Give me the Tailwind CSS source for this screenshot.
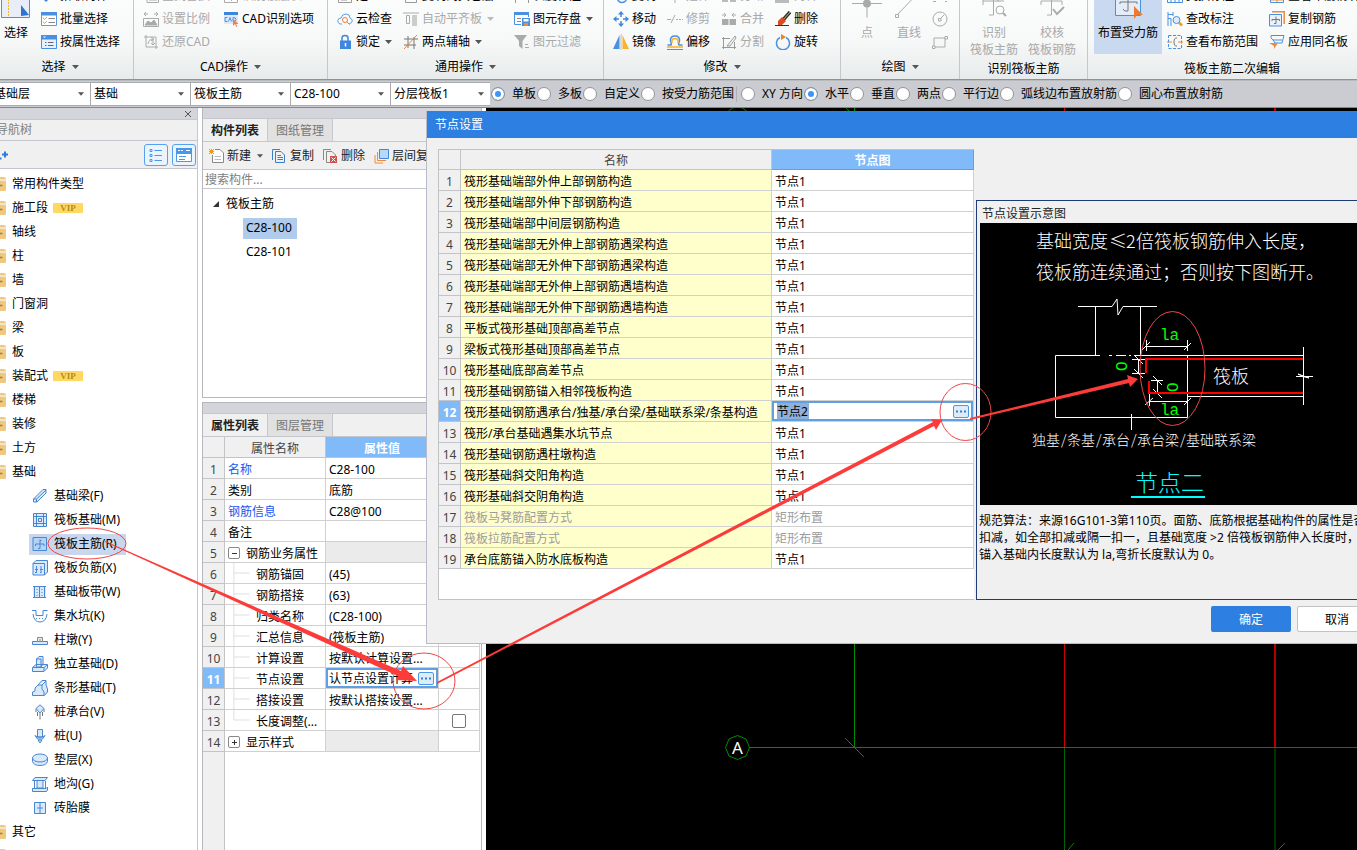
<!DOCTYPE html>
<html lang="zh-CN">
<head>
<meta charset="utf-8">
<title>节点设置</title>
<script src="https://cdn.jsdelivr.net/npm/@tailwindcss/browser@4"></script>
</head>
<body class="bg-white text-black text-[12px] leading-4 font-['Noto_Sans','Noto_Sans_CJK_SC',sans-serif]">
<svg class="hidden">
  <symbol id="ar" viewBox="0 0 7 4"><path d="M0 0H7L3.500 4Z" fill="#555"/></symbol>
  <symbol id="arg" viewBox="0 0 7 4"><path d="M0 0H7L3.500 4Z" fill="#bbb"/></symbol>
  <symbol id="fold" viewBox="0 0 16 14"><path d="M0 2Q0 0 2 0H14L16 1V2.500H0ZM0 3.500H16V12.500Q16 14 14.500 14H0Z" fill="#efc982"/><path d="M8 8.500H12.500" stroke="#a87b2a" stroke-width="1.500"/></symbol>
  <symbol id="ln" viewBox="0 0 17 21"><path d="M.5 0V21M.5 10.500H17" stroke="#ddd" fill="none"/></symbol>
  <symbol id="lne" viewBox="0 0 17 21"><path d="M.5 0V10.500H17" stroke="#ddd" fill="none"/></symbol>
</svg>
<div class="relative flex h-screen flex-col overflow-hidden whitespace-nowrap">

<!-- Ribbon -->
<header class="flex h-20 shrink-0 overflow-hidden border-b border-[#8d9294] bg-linear-to-b from-[#fbfcfc] via-[#f7f9f9] to-[#e8ebeb] [&_h2]:pt-[2px]">
  <section class="-ml-[13px] flex w-[147px] shrink-0 flex-col border-r border-[#c4c8cb]">
    <div class="-mt-4 flex h-[69px] pl-[13px]">
      <button class="flex w-[32px] flex-col items-center">
        <svg class="h-10 w-8 shrink-0" viewBox="0 0 32 40" fill="none"><path d="M1.500 0V33.500H29.500V0" fill="#e9edf8" stroke="#4a93e2"/><path d="M8.500 0V33" stroke="#eeb53c" stroke-dasharray="2 1"/><path d="M21 21V32L29 31Z" fill="#2c74d0"/></svg>
        <span class="leading-[17px]">选择</span>
      </button>
      <div class="ml-[9px] *:flex *:h-[23px] *:items-center *:gap-[3px] [&_svg]:size-4">
        <button><svg viewBox="0 0 16 16"><path d="M4 13L9 8" stroke="#3f88dd" stroke-width="3"/></svg>拾取构件</button>
        <button><svg viewBox="0 0 16 16" fill="none"><path d="M.5 1.500H15.500V14.500H.5Z" fill="#fff" stroke="#5a9be4"/><path d="M0 1H16V4.500H0Z" fill="#4a90e0"/><path d="M2 6.500L3.500 8.500L6 6M2 10.500L3.500 12.500L6 10" stroke="#e8a33d"/><path d="M7.500 7.500H14M7.500 11.500H14" stroke="#888"/></svg>批量选择</button>
        <button><svg viewBox="0 0 16 16" fill="none"><path d="M.5 1.500H15.500V14.500H.5Z" fill="#e7f1fd" stroke="#4a90e0"/><path d="M0 1H16V5.500H0Z" fill="#4a90e0"/><path d="M2 2.500H5L3.500 4Z" fill="#fff"/><path d="M4 8.500H5.500M7 8.500H12.500M4 11.500H5.500M7 11.500H12.500" stroke="#667"/></svg>按属性选择</button>
      </div>
    </div>
    <h2 class="flex h-[26px] items-center justify-center gap-[6px]">选择<svg class="h-1 w-[7px]"><use href="#ar"/></svg></h2>
  </section>

  <section class="flex w-[194px] shrink-0 flex-col border-r border-[#c4c8cb]">
    <div class="-mt-4 flex pl-[9px] *:h-[69px] [&_button]:flex [&_button]:h-[23px] [&_button]:items-center [&_button]:gap-[3px] [&_svg]:size-4">
      <div class="w-[80px] text-[#a9a9a9]">
        <button><svg viewBox="0 0 16 16" fill="none" stroke="#aaa"><path d="M4 3.500H15.500V14.500H4ZM6 9H14M6 12H14"/></svg>查找替换</button>
        <button><svg viewBox="0 0 16 16" fill="none" stroke="#aaa"><path d="M1 3H5M11 3H15M3 1L1 3L3 5M13 1L15 3L13 5M.5 7.500H15.500V15.500H.5Z"/><path d="M2 14L5 10L8 12L11 9L14 14Z" fill="#aaa"/></svg>设置比例</button>
        <button><svg viewBox="0 0 16 16" fill="none" stroke="#aaa"><path d="M1 3H13V15M3 1V13H15M5 10Q6 5 10 5M8 3L11 5L8 7M10 6V11M8 9L10 11L12 9"/></svg>还原CAD</button>
      </div>
      <div>
        <button class="text-[#a9a9a9]"><svg viewBox="0 0 16 16" fill="none" stroke="#aaa"><path d="M1.500 3.500H14.500V14.500H1.500ZM5 9L9 13"/></svg>识别楼层表</button>
        <button><svg viewBox="0 0 16 16"><path d="M1 1H15V13H1Z" fill="#dceafb"/><path d="M1 1H15V4H1Z" fill="#3d86dc"/><path d="M4.500 6.500H2V10.500H4.500M5.500 10.500L7 6.500L8.500 10.500M10 6.500V10.500Q13 10.500 13 8.500T10 6.500" fill="none" stroke="#4a90e0"/><path d="M10 8V15L12 13L13.500 16L14.500 15.500L13 13H15.500Z" fill="#ee7f55"/></svg>CAD识别选项</button>
      </div>
    </div>
    <h2 class="flex h-[26px] items-center justify-center gap-[6px]">CAD操作<svg class="h-1 w-[7px]"><use href="#ar"/></svg></h2>
  </section>

  <section class="flex w-[276px] shrink-0 flex-col border-r border-[#c4c8cb]">
    <div class="-mt-4 flex pl-[9px] *:h-[69px] [&_button]:flex [&_button]:h-[23px] [&_button]:items-center [&_button]:gap-[3px]">
      <div class="w-[66px]">
        <button><svg class="size-4" viewBox="0 0 16 16" fill="none" stroke="#999"><path d="M1.500 3.500H14.500V14.500H1.500ZM4 12H10"/></svg>定义</button>
        <button><svg class="size-4" viewBox="0 0 16 16" fill="none"><path d="M5 13H3Q.5 12 .8 9.500T4 7Q5 3 9 3T13 7Q15.500 8 15.300 10T12 13" stroke="#5aa0ea"/><circle cx="8" cy="9" r="2.500" stroke="#ee7d3c"/><path d="M10 11L12.500 13.500" stroke="#ee7d3c"/></svg>云检查</button>
        <button><svg class="size-4" viewBox="0 0 16 16" fill="none"><path d="M5 7V4Q5 1.500 8 1.500T11 4V7" stroke="#4286dc" stroke-width="1.500"/><path d="M3 6.500H14V15H3Z" fill="#3f86de"/><path d="M8.500 9V12.500" stroke="#fff" stroke-width="1.500"/></svg>锁定<svg class="ml-[2px] h-1 w-[7px]"><use href="#ar"/></svg></button>
      </div>
      <div class="w-[111px]">
        <button><svg class="size-4" viewBox="0 0 16 16" fill="none" stroke="#999"><path d="M2.500 3.500H13.500V14.500H2.500Z"/></svg>复制到其它层</button>
        <button class="text-[#a9a9a9]"><svg class="size-4" viewBox="0 0 16 16" fill="none"><path d="M0 2H16M3.500 4.500H6.500V12.500H3.500Z" stroke="#aaa"/><path d="M9 4H14V15H9Z" fill="#ccc"/></svg>自动平齐板<svg class="ml-[2px] h-1 w-[7px]"><use href="#arg"/></svg></button>
        <button><svg class="size-4" viewBox="0 0 16 16" fill="none"><path d="M5 2V14M11 3V15M1 5H15M1 11H13" stroke="#777"/><path d="M1 15L14 1" stroke="#e98546"/></svg>两点辅轴<svg class="ml-[2px] h-1 w-[7px]"><use href="#ar"/></svg></button>
      </div>
      <div>
        <button><svg class="size-4" viewBox="0 0 16 16" fill="none" stroke="#999"><path d="M1.500 9V15M14.500 9V15M2 11H14"/></svg>长度标注</button>
        <button><svg class="size-4" viewBox="0 0 16 16" fill="none"><path d="M.5 2H14.500V6M.5 2V13.500H7" stroke="#4a90e0"/><path d="M0 1H15V4H0Z" fill="#4a90e0"/><path d="M3 7.500H7M3 10.500H7" stroke="#888"/><path d="M8 7H16V15H8Z" fill="#4a90e0"/><path d="M9.500 8H14.500V10.500H9.500Z" fill="#fff"/><path d="M10 12H14V15H10Z" fill="#ee8a3c"/></svg>图元存盘<svg class="ml-[2px] h-1 w-[7px]"><use href="#ar"/></svg></button>
        <button class="text-[#a9a9a9]"><svg class="size-4" viewBox="0 0 16 16"><path d="M0 1H13L8.500 7V15L5 12V7Z" fill="#aaa"/><path d="M11 10.500H14M11 13.500H15" stroke="#aaa"/></svg>图元过滤</button>
      </div>
    </div>
    <h2 class="flex h-[26px] items-center justify-center gap-[6px]">通用操作<svg class="h-1 w-[7px]"><use href="#ar"/></svg></h2>
  </section>

  <section class="flex w-[237px] shrink-0 flex-col border-r border-[#c4c8cb]">
    <div class="-mt-4 flex pl-[9px] *:h-[69px] *:w-[54px] [&_button]:flex [&_button]:h-[23px] [&_button]:items-center [&_button]:gap-[3px] [&_svg]:size-4">
      <div>
        <button><svg viewBox="0 0 16 16" fill="none" stroke="#4a90e0" stroke-width="1.500"><circle cx="9" cy="10" r="4.500"/></svg>复制</button>
        <button><svg viewBox="0 0 16 16" fill="#3f86de"><path d="M8 0L11 3.500H5ZM8 16L5 12.500H11ZM0 8L3.500 5V11ZM16 8L12.500 11V5Z"/><path d="M8 3V6M8 10V13M3 8H6M10 8H13" stroke="#3f86de" stroke-width="1.500"/></svg>移动</button>
        <button><svg viewBox="0 0 16 16"><path d="M6.500 1V15H0Z" fill="#4a90e0"/><path d="M9.500 1V15H16Z" fill="#f9b233"/><path d="M8 0V16" stroke="#bbb"/></svg>镜像</button>
      </div>
      <div>
        <button class="text-[#a9a9a9]"><svg viewBox="0 0 16 16" stroke="#aaa"><path d="M8 7V15"/></svg>延伸</button>
        <button class="text-[#a9a9a9]"><svg viewBox="0 0 16 16" fill="none" stroke="#aaa"><path d="M0 8.500H4M4 12L8 4M9 8.500H11M12 8.500H14M15 8.500H16"/></svg>修剪</button>
        <button><svg viewBox="0 0 16 16" fill="none"><path d="M.5 11H4Q5 10 3.500 7Q3 2 8 2T12.500 7Q11 10 12 11H15.500" stroke="#4a90e0" stroke-width="1.500"/><path d="M5 9V7Q5 4.500 8 4.500T11 7V9M0 13H16" stroke="#f5b335" stroke-width="1.500"/><path d="M0 15.500H16" stroke="#4a90e0"/></svg>偏移</button>
      </div>
      <div class="text-[#a9a9a9]">
        <button><svg viewBox="0 0 16 16" fill="#bbb"><path d="M1 10H7V14H1ZM9 10H15V14H9Z"/></svg>打断</button>
        <button><svg viewBox="0 0 16 16" fill="#aaa"><path d="M1 8H7.500V14H1ZM8.500 8H15V14H8.500Z"/><path d="M1 4H5M3 2L5 4L3 6M15 4H11M13 2L11 4L13 6" fill="none" stroke="#aaa"/></svg>合并</button>
        <button><svg viewBox="0 0 16 16" fill="none" stroke="#999"><path d="M1 4.500H9M15 13.500H1M2.500 3V15M13.500 8V15M6 12L14 2L15 4L9 12Z"/></svg>分割</button>
      </div>
      <div>
        <button class="text-[#a9a9a9]"><svg viewBox="0 0 16 16"><path d="M0 8H14V15H0Z" fill="#bbb"/></svg>对齐</button>
        <button><svg viewBox="0 0 16 16"><path d="M15 1L8 9" stroke="#333" stroke-width="3.500"/><path d="M15 1L8 9" stroke="#d8a35b" stroke-width="1"/><path d="M7 6L11 10L7 14H3L3 10Z" fill="#db4c22"/><path d="M0 14.500H14" stroke="#333"/></svg>删除</button>
        <button><svg viewBox="0 0 16 16" fill="none"><path d="M5 3.500A6.500 6.500 0 1 0 11 3.500" stroke="#4a90e0" stroke-width="1.500"/><path d="M6 0L11 3L6 6Z" fill="#ee8322"/></svg>旋转</button>
      </div>
    </div>
    <h2 class="flex h-[26px] items-center justify-center gap-[6px]">修改<svg class="h-1 w-[7px]"><use href="#ar"/></svg></h2>
  </section>

  <section class="flex w-[119px] shrink-0 flex-col border-r border-[#c4c8cb]">
    <div class="-mt-4 flex h-[69px] pl-[11px] text-[#a9a9a9]">
      <button class="flex w-[30px] flex-col items-center"><svg class="h-10 w-8 shrink-0" viewBox="0 0 32 40"><path d="M1 19.500H31M16 4V33.500" stroke="#aaa"/><circle cx="16" cy="19.500" r="4" fill="#aaa"/></svg><span class="leading-[17px]">点</span></button>
      <button class="ml-[12px] flex w-[30px] flex-col items-center"><svg class="h-10 w-8 shrink-0" viewBox="0 0 32 40" fill="none" stroke="#aaa"><path d="M5 30L26 8M2.500 30.500H5.500V33.500H2.500Z"/></svg><span class="leading-[17px]">直线</span></button>
      <div class="ml-[8px] *:flex *:h-[23px] *:items-center [&_svg]:size-4">
        <button aria-label="弧"><svg viewBox="0 0 16 16" fill="none" stroke="#aaa"><path d="M1 13.500H4M13 13.500H15"/></svg></button>
        <button aria-label="圆"><svg viewBox="0 0 16 16" fill="none" stroke="#aaa"><circle cx="8" cy="8" r="7"/><path d="M6.500 7.500H9V10H6.500ZM9 7L12 4"/></svg></button>
        <button aria-label="矩形"><svg viewBox="0 0 16 16" fill="none" stroke="#aaa"><path d="M2 4H13V13H2Z"/><path d="M.5 12H3V14.500H.5ZM13 2.500H15.500V5H13Z" fill="#fff"/></svg></button>
      </div>
    </div>
    <h2 class="flex h-[26px] items-center justify-center gap-[6px]">绘图<svg class="h-1 w-[7px]"><use href="#ar"/></svg></h2>
  </section>

  <section class="flex w-[128px] shrink-0 flex-col border-r border-[#c4c8cb]">
    <div class="-mt-4 flex h-[73px] gap-[10px] pl-[10px] text-[#a9a9a9]">
      <button class="flex flex-col items-center"><svg class="h-10 w-8 shrink-0" viewBox="0 0 32 40" fill="none" stroke="#aaa"><path d="M5 21V17H26M15.500 10V31H11M5 17V15M20 18V15"/><circle cx="22" cy="26" r="4"/><path d="M25 29L28 32" stroke-width="2"/></svg><span class="leading-[17px]">识别<br>筏板主筋</span></button>
      <button class="flex flex-col items-center"><svg class="h-10 w-8 shrink-0" viewBox="0 0 32 40" fill="none" stroke="#aaa"><path d="M5 21V17H26V21M15.500 10V31H11"/><path d="M17 25L21 30L28 23" stroke-width="2"/></svg><span class="leading-[17px]">校核<br>筏板钢筋</span></button>
    </div>
    <h2 class="flex h-[22px] items-center justify-center">识别筏板主筋</h2>
  </section>

  <section class="flex w-[288px] shrink-0 flex-col">
    <div class="-mt-4 flex h-[73px] pl-[6px] [&_div_button]:flex [&_div_button]:h-[23px] [&_div_button]:items-center [&_div_button]:gap-[3px] [&_div_svg]:size-4">
      <button class="flex h-[70px] w-[68px] flex-col items-center bg-[#c9d9f0]"><svg class="h-10 w-8 shrink-0" viewBox="0 0 32 40" fill="none"><path d="M3.500 0V31.500H28.500V0" fill="#e3edfa" stroke="#4a90e0"/><path d="M8 20V18H25V20M16 8V27Q12 28 11 25" stroke="#777"/><path d="M22 22V35L25 31H31Z" fill="#ee7a2b"/></svg><span class="leading-[17px]">布置受力筋</span></button>
      <div class="ml-[5px] w-[102px]">
        <button><svg viewBox="0 0 16 16" fill="none" stroke="#4a90e0"><path d="M.5 8V14.500H15.500V8M4 10V14M8 10V14M12 10V14"/></svg>交换标注</button>
        <button><svg viewBox="0 0 16 16" fill="none"><path d="M1 1V15M1 3.500H6M1 7.500H4V15M6 1V5" stroke="#4a90e0"/><circle cx="9.500" cy="9" r="3.500" fill="#dcecfb" stroke="#4a90e0"/><path d="M12 11.500L15 14.500" stroke="#f09a2a" stroke-width="2.500"/></svg>查改标注</button>
        <button><svg viewBox="0 0 16 16" fill="none"><path d="M1.500 1.500H14.500V14.500H1.500Z" stroke="#4a90e0" stroke-dasharray="3 1.500"/><path d="M0 8H5M11 8H16" stroke="#ee8a3c"/><path d="M10 4Q7 3.500 7 8T10 12" stroke="#777"/></svg>查看布筋范围</button>
      </div>
      <div>
        <button><svg viewBox="0 0 16 16" fill="none" stroke="#ee8a3c"><path d="M1 12H15M8 8V15"/><path d="M1.500 8V14.500H14.500V8" stroke="#4a90e0"/></svg>查看布筋情况</button>
        <button><svg viewBox="0 0 16 16" fill="none"><path d="M3 .8H15.200V13" stroke="#ee8a3c" stroke-width="1.500"/><path d="M.5 3.500H12.500V15H.5Z" fill="#e8f1fc" stroke="#4a90e0"/><path d="M3 10V8.500H10.500V10M7 5.500V12.500H5" stroke="#777"/></svg>复制钢筋</button>
        <button><svg viewBox="0 0 16 16" fill="none"><path d="M2 1.500H15L13 9H6L4 6H13M2 1.500V4L4 6" stroke="#4a90e0"/><path d="M0 9H9L5 15V12Z" fill="#ee8a3c"/></svg>应用同名板</button>
      </div>
    </div>
    <h2 class="flex h-[22px] items-center justify-center">筏板主筋二次编辑</h2>
  </section>
</header>

<!-- Option bar -->
<form class="flex h-[28px] shrink-0 items-center border-t border-b border-t-[#b8bbbe] border-b-[#85898c] bg-[#caccd1]">
  <div class="-ml-[10px] flex [&_select]:h-[22px] [&_select]:w-full [&_select]:appearance-none [&_select]:bg-white [&_select]:pl-[3px] [&_select]:leading-[22px] [&>span]:relative [&>span]:w-[100px] [&>span]:border [&>span]:border-r-0 [&>span]:border-[#a9abb0] [&_svg]:absolute [&_svg]:right-[6px] [&_svg]:top-[9px] [&_svg]:h-1 [&_svg]:w-[6px] [&_svg]:pointer-events-none">
    <span><select aria-label="楼层"><option>基础层</option></select><svg><use href="#ar"/></svg></span>
    <span><select aria-label="分类"><option>基础</option></select><svg><use href="#ar"/></svg></span>
    <span><select aria-label="构件类型"><option>筏板主筋</option></select><svg><use href="#ar"/></svg></span>
    <span><select aria-label="构件"><option>C28-100</option></select><svg><use href="#ar"/></svg></span>
    <span><select aria-label="分层"><option>分层筏板1</option></select><svg><use href="#ar"/></svg></span>
  </div>
  <div class="ml-px flex gap-px [&_label]:flex [&_label]:items-center [&_label]:gap-[7px] [&_input]:size-[14px] [&_input]:appearance-none [&_input]:rounded-full [&_input]:border [&_input]:border-[#929498] [&_input]:bg-white [&_input:checked]:bg-[#3d96f5] [&_input:checked]:shadow-[inset_0_0_0_3px_white]">
    <label><input type="radio" name="scope" checked>单板</label>
    <label><input type="radio" name="scope">多板</label>
    <label><input type="radio" name="scope">自定义</label>
    <label><input type="radio" name="scope">按受力筋范围</label>
    <span class="ml-px mr-[3px] w-px bg-[#aeb0b5]"></span>
    <label><input type="radio" name="dir">XY 方向</label>
    <label><input type="radio" name="dir" checked>水平</label>
    <label><input type="radio" name="dir">垂直</label>
    <label><input type="radio" name="dir">两点</label>
    <label><input type="radio" name="dir">平行边</label>
    <label><input type="radio" name="dir">弧线边布置放射筋</label>
    <label><input type="radio" name="dir">圆心布置放射筋</label>
  </div>
</form>

<main class="flex min-h-0 flex-1">
  <!-- Navigation tree -->
  <nav class="mr-1 flex w-[198px] shrink-0 flex-col overflow-hidden border-r border-[#c5c7ce]">
    <div class="flex h-[11px] shrink-0 items-center justify-end bg-[#d3d5da] pr-[6px]"><button aria-label="关闭"><svg class="size-[6px]" viewBox="0 0 6 6" stroke="#555"><path d="M0 0L6 6M6 0L0 6"/></svg></button></div>
    <h2 class="flex h-[22px] shrink-0 items-center border-y border-[#c5c7ce] bg-[#f0f0f0] text-[#808080]"><span class="-ml-1">导航树</span></h2>
    <div class="flex h-[28px] shrink-0 items-center border-b border-[#c5c7ce] bg-[#f0f0f0] pr-px">
      <button aria-label="展开"><svg class="h-3 w-2" viewBox="0 0 8 12"><path d="M0 9.500H1.500M2 5.500H8M5 2.500V8.500" stroke="#2f7bd6" stroke-width="2"/></svg></button>
      <button aria-label="列表" class="ml-auto flex h-[22px] w-6 items-center justify-center rounded-[3px] border border-[#55a0f0] bg-[#eaf3fe]"><svg class="size-[14px]" viewBox="0 0 14 14" fill="none" stroke="#4a97ea"><path d="M1 1.500H3V3.500H1ZM1 6.500H3V8.500H1ZM1 11.500H3V13.500H1ZM5.500 2.500H13M5.500 7.500H13M5.500 12.500H13"/></svg></button>
      <button aria-label="窗口" class="ml-1 flex h-[22px] w-6 items-center justify-center rounded-[3px] border border-[#55a0f0] bg-[#eaf3fe]"><svg class="h-[14px] w-4" viewBox="0 0 16 14" fill="none"><path d="M.5 1H15.500V13.500H.5Z" fill="#fff" stroke="#4a97ea"/><path d="M0 0H16V6H0Z" fill="#4a97ea"/><path d="M2 2.500H4M5 2.500H7M10 2.500H14" stroke="#fff"/><path d="M3 8.500H10M3 11.500H9" stroke="#4a97ea"/></svg></button>
    </div>
    <div class="min-h-0 flex-1 overflow-hidden bg-white pt-[3px]">
      <ul class="-ml-[10px] [&>li]:flex [&>li]:h-6 [&>li]:items-center [&>li]:gap-[6px] [&>li>svg]:h-[14px] [&>li>svg]:w-4 [&_b]:ml-[-1px] [&_b]:h-[10px] [&_b]:w-[30px] [&_b]:bg-[#ffd863] [&_b]:text-center [&_b]:font-['Liberation_Serif',serif] [&_b]:text-[9px] [&_b]:leading-[11px] [&_b]:text-[#b08c1c]">
        <li><svg><use href="#fold"/></svg>常用构件类型</li>
        <li><svg><use href="#fold"/></svg>施工段<b>VIP</b></li>
        <li><svg><use href="#fold"/></svg>轴线</li>
        <li><svg><use href="#fold"/></svg>柱</li>
        <li><svg><use href="#fold"/></svg>墙</li>
        <li><svg><use href="#fold"/></svg>门窗洞</li>
        <li><svg><use href="#fold"/></svg>梁</li>
        <li><svg><use href="#fold"/></svg>板</li>
        <li><svg><use href="#fold"/></svg>装配式<b>VIP</b></li>
        <li><svg><use href="#fold"/></svg>楼梯</li>
        <li><svg><use href="#fold"/></svg>装修</li>
        <li><svg><use href="#fold"/></svg>土方</li>
        <li><svg><use href="#fold"/></svg>基础</li>
      </ul>
      <ul class="pl-[29px] [&>li]:flex [&>li]:h-6 [&>li]:items-center [&_a]:flex [&_a]:h-[21px] [&_a]:items-center [&_a]:gap-[6px] [&_a]:pl-[3px] [&_a]:pr-[9px] [&_svg]:size-4 [&_svg]:fill-[#d9e8fa] [&_svg]:stroke-[#4687d0]">
        <li><a href="#"><svg viewBox="0 0 16 16"><path d="M1.500 11L11 1.500H14V5L5 14H1.500ZM1.500 11H4.500V14M4.500 11L14 2"/></svg>基础梁(F)</a></li>
        <li><a href="#"><svg viewBox="0 0 16 16"><path d="M1.500 1.500H14.500V14.500H1.500ZM4.500 1V15M11.500 1V15M1 4.500H15M1 11.500H15M6.500 6.500H9.500V9.500H6.500Z"/></svg>筏板基础(M)</a></li>
        <li><a href="#" class="bg-[#c8d7ee]"><svg viewBox="0 0 16 16"><path d="M1 1.500H14.500V14.500H1Z" fill="#b4d3f4"/><path d="M3.500 10V8H12V10M8 3.500V12.500H6M8 4.500H9.500" fill="none"/></svg>筏板主筋(R)</a></li>
        <li><a href="#"><svg viewBox="0 0 16 16"><path d="M1 3.500H12.500V15H1ZM1 3.500L4 .5H15.500V12L12.500 15"/><path d="M4.500 6V13M9 6V13M3 9.500H6M8 9.500H11M3 12.500H4.500M8 12.500H9" fill="none"/></svg>筏板负筋(X)</a></li>
        <li><a href="#"><svg viewBox="0 0 16 16"><path d="M1 2.500H14V13.500H1Z" stroke="none"/><path d="M1 2.500H14M1 13.500H14M2.500 3V13M7.500 2V14M12.500 3V13" /><path d="M5 5V12M10 5V12" stroke-dasharray="1 2"/></svg>基础板带(W)</a></li>
        <li><a href="#"><svg viewBox="0 0 16 16"><path d="M0 2.500H4V7.500H11V2.500H15.500M1 6Q2 14 8 14T15 6" fill="none"/><path d="M4 10.500H12" stroke-dasharray="1 2"/></svg>集水坑(K)</a></li>
        <li><a href="#"><svg viewBox="0 0 16 16"><path d="M.5 9.500H15.500V12.500H.5Z"/><path d="M5.500 5.500H10.500V9.500H5.500ZM8 7V9" stroke="#888" fill="#eee"/></svg>柱墩(Y)</a></li>
        <li><a href="#"><svg viewBox="0 0 16 16"><path d="M.5 11.500L4 8.500H15.500V12L12 15.500H.5ZM4.500 11V3L7 .5H11V8L9 11ZM4.500 3H9V11M12 11.500V15M1 11.500H12L15 9"/></svg>独立基础(D)</a></li>
        <li><a href="#"><svg viewBox="0 0 16 16"><path d="M.5 15.500V12L3 11V8L6 5L10 .5H14V5L15.500 9V12L12.500 15.500ZM6 5H10L14 1M10 5V9L12 12V15"/></svg>条形基础(T)</a></li>
        <li><a href="#"><svg viewBox="0 0 16 16"><path d="M8 .8L12 4.500L8 9L4 4.500Z"/><path d="M4 5V8M12 5V8M8 9V15.500M5.500 8V12M10.500 8V12" stroke="#777"/></svg>桩承台(V)</a></li>
        <li><a href="#"><svg viewBox="0 0 16 16"><path d="M5.500 1.500H10.500V9H5.500ZM3 7.500L5.500 9H10.500L13 7.500L10.500 11H5.500ZM6 12H10L8 15Z"/></svg>桩(U)</a></li>
        <li><a href="#"><svg viewBox="0 0 16 16"><path d="M.5 6V9.500Q2 13.500 8 13.500T15.500 9.500V6"/><ellipse cx="8" cy="6" rx="7.500" ry="4"/></svg>垫层(X)</a></li>
        <li><a href="#"><svg viewBox="0 0 16 16"><path d="M.5 4.500L3 1.500H15.500L13 4.500ZM2.500 5V12M5 5V12H11V5M13.500 5V12M.5 12.500H14L15.500 11V14L14.500 15.500H.5Z"/></svg>地沟(G)</a></li>
        <li><a href="#"><svg viewBox="0 0 16 16"><path d="M2.500 2.500H13.500V13.500H2.500ZM8 2.500V13.500M5 8H11" /></svg>砖胎膜</a></li>
      </ul>
      <ul class="-ml-[10px] [&>li]:flex [&>li]:h-6 [&>li]:items-center [&>li]:gap-[6px] [&_svg]:h-[14px] [&_svg]:w-4">
        <li><svg><use href="#fold"/></svg>其它</li>
        <li><svg><use href="#fold"/></svg></li>
      </ul>
    </div>
  </nav>

  <!-- Component list and properties -->
  <div class="mr-1 flex w-[280px] shrink-0 flex-col overflow-hidden">
    <section class="flex h-[290px] shrink-0 flex-col border border-t-0 border-[#b5b7bd]">
      <div class="h-[11px] shrink-0 border-b border-[#c5c7ce] bg-[#d3d5da]"></div>
      <div class="flex h-[23px] shrink-0 border-b border-[#c5c7ce] bg-[#f0f0f0] *:w-[65px] *:border-r *:border-[#c5c7ce] *:pt-[2px]" role="tablist">
        <button role="tab" class="font-bold text-[#222]">构件列表</button><button role="tab" class="bg-[#e1e1e1] text-[#777]">图纸管理</button>
      </div>
      <div class="flex h-7 shrink-0 items-center border-b border-[#c5c7ce] bg-[#f0f0f0] pl-[6px] text-[#222] [&_button]:flex [&_button]:items-center [&_button]:gap-[3px]">
        <button><svg class="h-4 w-[15px]" viewBox="0 0 15 16" fill="none"><path d="M6 1.500H11L14.500 5V14.500H3.500V7" fill="#fff" stroke="#888"/><path d="M5.500 8.500H12M5.500 11.500H12" stroke="#bbb"/><path d="M0 1L5 6M5 1L0 6M0 3.500H5M2.500 1V6" stroke="#f09a1a"/></svg>新建<svg class="ml-[3px] h-1 w-[6px]"><use href="#ar"/></svg></button>
        <button class="ml-[9px]"><svg class="h-4 w-[15px]" viewBox="0 0 15 16" fill="none"><path d="M.5 12V1.500H8M3.500 3.500H9L12.500 7V14.500H3.500Z" stroke="#3b7fcb"/><path d="M5.500 7.500H9M5.500 9.500H11M5.500 11.500H11" stroke="#3b7fcb"/></svg>复制</button>
        <button class="ml-[9px]"><svg class="h-4 w-[15px]" viewBox="0 0 15 16" fill="none"><path d="M.5 12V1.500H8M3.500 14.500V3.500H9L12.500 7V8M3.500 14.500H7" stroke="#888"/><path d="M7 8H14V15H7Z" fill="#d05050"/><path d="M8.500 9.500L12.500 13.500M12.500 9.500L8.500 13.500" stroke="#fff"/></svg>删除</button>
        <button class="ml-[9px]"><svg class="h-4 w-[15px]" viewBox="0 0 15 16" fill="none"><path d="M5.500 1.500H14.500V10.500H5.500Z" fill="#b8d8fb" stroke="#3f8ae0"/><path d="M3.500 4V12.500H12M1 7V15H9" stroke="#ee8a3c"/></svg>层间复制</button>
      </div>
      <input type="text" aria-label="搜索构件" placeholder="搜索构件..." class="h-[19px] shrink-0 border-b border-[#c5c7ce] bg-white pl-[2px] outline-none placeholder:text-[#808080]">
      <ul class="pt-[3px] *:flex *:h-6 *:items-center">
        <li class="gap-[7px] pl-[10px]"><svg class="size-[6px]" viewBox="0 0 6 6"><path d="M6 0V6H0Z" fill="#333"/></svg>筏板主筋</li>
        <li class="pl-10"><span class="bg-[#b1cbed] pt-px pr-[5px] pb-[3px] pl-[3px] leading-[17px]">C28-100</span></li>
        <li class="pl-[43px]">C28-101</li>
      </ul>
    </section>
    <section class="mt-1 flex min-h-0 flex-1 flex-col border-x border-t border-[#b5b7bd]">
      <div class="h-[11px] shrink-0 border-b border-[#c5c7ce] bg-[#d3d5da]"></div>
      <div class="flex h-[23px] shrink-0 border-b border-[#c5c7ce] bg-[#f0f0f0] *:w-[65px] *:border-r *:border-[#c5c7ce] *:pt-[2px]" role="tablist">
        <button role="tab" class="font-bold text-[#222]">属性列表</button><button role="tab" class="bg-[#e1e1e1] text-[#777]">图层管理</button>
      </div>
      <table class="w-[277px] shrink-0 table-fixed border-separate border-spacing-0 text-left [&_td]:h-[21px] [&_td]:overflow-hidden [&_td]:border-r [&_td]:border-b [&_td]:border-[#d0d0d0] [&_td]:p-0 [&_td]:pt-[2px] [&_td]:pl-[3px] [&_td]:leading-[17px] [&_th]:h-[21px] [&_th]:border-r [&_th]:border-b [&_th]:border-[#c2c4c8] [&_th]:p-0 [&_th]:pt-[2px] [&_th]:text-center [&_th]:font-normal [&_th]:leading-[17px] [&_th]:text-[#444] [&_td>div]:flex [&_td>div]:h-[18px] [&_td>div]:items-center">
        <colgroup><col class="w-[22px]"><col class="w-[101px]"><col class="w-[113px]"><col class="w-[41px]"></colgroup>
        <thead class="bg-[#f0f0f0]"><tr><th></th><th>属性名称</th><th class="bg-[#80baf9]"><span class="font-bold text-white">属性值</span></th><th></th></tr></thead>
        <tbody class="[&_th]:bg-[#f0f0f0]">
          <tr><th>1</th><td class="text-[#1a56f0]">名称</td><td>C28-100</td><td></td></tr>
          <tr><th>2</th><td>类别</td><td>底筋</td><td></td></tr>
          <tr><th>3</th><td class="text-[#1a56f0]">钢筋信息</td><td>C28@100</td><td></td></tr>
          <tr><th>4</th><td>备注</td><td></td><td></td></tr>
          <tr><th>5</th><td><div class="gap-[6px]"><button aria-label="折叠" class="size-3 rounded-[2px] border border-[#888] bg-white"><svg class="size-[10px]" viewBox="0 0 10 10"><path d="M3 5.500H8" stroke="#333"/></svg></button>钢筋业务属性</div></td><td class="bg-[#ebebeb]"></td><td></td></tr>
          <tr><th>6</th><td><div class="gap-[6px] pl-[5px]"><svg class="-mt-[2px] h-5 w-[17px]"><use href="#ln"/></svg>钢筋锚固</div></td><td>(45)</td><td></td></tr>
          <tr><th>7</th><td><div class="gap-[6px] pl-[5px]"><svg class="-mt-[2px] h-5 w-[17px]"><use href="#ln"/></svg>钢筋搭接</div></td><td>(63)</td><td></td></tr>
          <tr><th>8</th><td><div class="gap-[6px] pl-[5px]"><svg class="-mt-[2px] h-5 w-[17px]"><use href="#ln"/></svg>归类名称</div></td><td>(C28-100)</td><td></td></tr>
          <tr><th>9</th><td><div class="gap-[6px] pl-[5px]"><svg class="-mt-[2px] h-5 w-[17px]"><use href="#ln"/></svg>汇总信息</div></td><td>(筏板主筋)</td><td></td></tr>
          <tr><th>10</th><td><div class="gap-[6px] pl-[5px]"><svg class="-mt-[2px] h-5 w-[17px]"><use href="#ln"/></svg>计算设置</div></td><td>按默认计算设置...</td><td></td></tr>
          <tr><th class="bg-[#80baf9]!"><span class="font-bold text-white">11</span></th><td><div class="gap-[6px] pl-[5px]"><svg class="-mt-[2px] h-5 w-[17px]"><use href="#ln"/></svg>节点设置</div></td><td class="p-0!"><div class="h-5! border-2 border-[#5f9fe2] pl-px"><input type="text" aria-label="节点设置" value="认节点设置计算" class="h-4 w-[86px] pt-px outline-none"><button aria-label="编辑节点" class="ml-[3px] h-[13px] w-4 rounded-[2px] border border-[#4b98e6] bg-[#deecfa]"><svg class="h-[11px] w-[14px]" viewBox="0 0 14 11"><path d="M2 5.500H12" stroke="#2f7fd6" stroke-width="2" stroke-dasharray="2 2"/></svg></button></div></td><td></td></tr>
          <tr><th>12</th><td><div class="gap-[6px] pl-[5px]"><svg class="-mt-[2px] h-5 w-[17px]"><use href="#ln"/></svg>搭接设置</div></td><td>按默认搭接设置...</td><td></td></tr>
          <tr><th>13</th><td><div class="gap-[6px] pl-[5px]"><svg class="-mt-[2px] h-5 w-[17px] shrink-0"><use href="#lne"/></svg>长度调整(...</div></td><td></td><td><div class="justify-center pr-[3px]"><input type="checkbox" aria-label="长度调整附加" class="size-[14px] appearance-none rounded-[2px] border border-[#777] bg-white"></div></td></tr>
          <tr><th>14</th><td><div class="gap-[6px]"><button aria-label="展开" class="size-3 rounded-[2px] border border-[#888] bg-white"><svg class="size-[10px]" viewBox="0 0 10 10"><path d="M3 5.500H8M5.500 3V8" stroke="#333"/></svg></button>显示样式</div></td><td class="bg-[#ebebeb]"></td><td></td></tr>
        </tbody>
      </table>
      <div class="w-[22px] flex-1 border-r border-[#c2c4c8] bg-[#f0f0f0]"></div>
    </section>
  </div>

  <!-- Drawing canvas, in page coordinates shifted to the canvas origin -->
  <div class="min-w-0 flex-1 overflow-hidden bg-black">
    <svg class="h-full w-full" fill="none"><g transform="translate(-486 -108)">
      <circle cx="737.500" cy="119" r="12" stroke="#008000"/><path d="M845 107L849 111" stroke="#008000"/>
      <path d="M854.500 108V747M749 747.500H1065M845 738L864 757" stroke="#008c00"/>
      <path d="M1064.500 748V850M1275 748V850" stroke="#006400"/><path d="M1068 850L1074 843M1278 850L1285 843" stroke="#008c00"/>
      <path d="M1064.500 108V747" stroke="#c80000"/><path d="M1275 108V747" stroke="#b00000" stroke-width="2"/><path d="M1065 747.500H2400" stroke="#ff0000"/>
      <path d="M737.500 735.500L746 739L749.500 747.500L746 756L737.500 759.500L729 756L725.500 747.500L729 739Z" stroke="#008c00"/>
      <text x="737.500" y="754" text-anchor="middle" font-size="17" fill="#fff">A</text>
    </g></svg>
  </div>
</main>

<!-- Node settings window -->
<div role="dialog" aria-label="节点设置" class="absolute left-[426px] top-[111px] flex h-[533px] w-[962px] flex-col border border-t-0 border-[#b9bcc8] bg-[#f0f0f0]">
  <h1 class="flex h-[27px] shrink-0 items-center bg-[#2d80e2] pl-2 text-white">节点设置</h1>
  <div class="mt-[11px] flex h-[451px] pl-[11px]">
    <div class="w-[536px] border border-r-0 border-[#c0c2c6] bg-white">
      <table class="w-full table-fixed border-separate border-spacing-0 text-left [&_td]:h-[21px] [&_td]:border-r [&_td]:border-b [&_td]:border-[#d0d0d0] [&_td]:p-0 [&_td]:pt-[2px] [&_td]:pl-[3px] [&_td]:leading-[17px] [&_th]:h-[20px] [&_th]:border-r [&_th]:border-b [&_th]:border-[#c2c4c8] [&_th]:p-0 [&_th]:pt-[2px] [&_th]:text-center [&_th]:font-normal [&_th]:leading-[17px] [&_th]:text-[#444] [&_tbody_td:nth-child(2)]:bg-[#ffffcb]">
        <colgroup><col class="w-[22px]"><col class="w-[311px]"><col></colgroup>
        <thead class="bg-[#f0f0f0]"><tr><th></th><th>名称</th><th class="border-[#5f9fe2]! bg-[#80baf9]"><span class="font-bold text-white">节点图</span></th></tr></thead>
        <tbody class="[&_th]:bg-[#f0f0f0]">
          <tr><th>1</th><td>筏形基础端部外伸上部钢筋构造</td><td>节点1</td></tr>
          <tr><th>2</th><td>筏形基础端部外伸下部钢筋构造</td><td>节点1</td></tr>
          <tr><th>3</th><td>筏形基础端部中间层钢筋构造</td><td>节点1</td></tr>
          <tr><th>4</th><td>筏形基础端部无外伸上部钢筋遇梁构造</td><td>节点1</td></tr>
          <tr><th>5</th><td>筏形基础端部无外伸下部钢筋遇梁构造</td><td>节点1</td></tr>
          <tr><th>6</th><td>筏形基础端部无外伸上部钢筋遇墙构造</td><td>节点1</td></tr>
          <tr><th>7</th><td>筏形基础端部无外伸下部钢筋遇墙构造</td><td>节点1</td></tr>
          <tr><th>8</th><td>平板式筏形基础顶部高差节点</td><td>节点1</td></tr>
          <tr><th>9</th><td>梁板式筏形基础顶部高差节点</td><td>节点1</td></tr>
          <tr><th>10</th><td>筏形基础底部高差节点</td><td>节点1</td></tr>
          <tr><th>11</th><td>筏形基础钢筋锚入相邻筏板构造</td><td>节点1</td></tr>
          <tr><th class="bg-[#80baf9]!"><span class="font-bold text-white">12</span></th><td>筏形基础钢筋遇承台/独基/承台梁/基础联系梁/条基构造</td><td class="p-0!"><div class="flex h-5 items-center justify-between border-2 border-[#5f9fe2] pl-[3px] pr-[2px]"><input type="text" aria-label="节点图" value="节点2" class="h-4 w-8 bg-[#8fb0d8] pt-px outline-none"><button aria-label="选择节点图" class="h-[13px] w-4 rounded-[2px] border border-[#4b98e6] bg-[#deecfa]"><svg class="h-[11px] w-[14px]" viewBox="0 0 14 11"><path d="M2 5.500H12" stroke="#2f7fd6" stroke-width="2" stroke-dasharray="2 2"/></svg></button></div></td></tr>
          <tr><th>13</th><td>筏形/承台基础遇集水坑节点</td><td>节点1</td></tr>
          <tr><th>14</th><td>筏形基础钢筋遇柱墩构造</td><td>节点1</td></tr>
          <tr><th>15</th><td>筏形基础斜交阳角构造</td><td>节点1</td></tr>
          <tr><th>16</th><td>筏形基础斜交阴角构造</td><td>节点1</td></tr>
          <tr class="[&_td]:text-[#9c9c9c]"><th>17</th><td>筏板马凳筋配置方式</td><td>矩形布置</td></tr>
          <tr class="[&_td]:text-[#9c9c9c]"><th>18</th><td>筏板拉筋配置方式</td><td>矩形布置</td></tr>
          <tr><th>19</th><td>承台底筋锚入防水底板构造</td><td>节点1</td></tr>
        </tbody>
      </table>
    </div>
    <figure class="mt-[51px] ml-[2px] flex w-[402px] flex-col overflow-hidden border border-[#1f3c78]">
      <figcaption class="flex h-[22px] shrink-0 items-center pt-[4px] pl-[5px] text-[#222]">节点设置示意图</figcaption>
      <!-- Node diagram, drawn in page coordinates -->
      <svg class="ml-[3px] h-[282px] w-[394px] shrink-0 bg-black font-['Noto_Sans_CJK_SC',sans-serif] font-light" viewBox="980 223 394 282" fill="none" stroke="#fff">
        <g fill="#fff" stroke="none" font-size="18">
          <text y="248"><tspan x="1036">基础宽度</tspan><tspan x="1109">≤</tspan><tspan x="1126">2</tspan><tspan x="1136">倍筏板钢筋伸入长度，</tspan></text>
          <text x="1036" y="279">筏板筋连续通过；否则按下图断开。</text>
          <text x="1213" y="383">筏板</text>
          <text y="445" font-size="14"><tspan x="1032">独基</tspan><tspan x="1061">/</tspan><tspan x="1067">条基</tspan><tspan x="1096">/</tspan><tspan x="1102">承台</tspan><tspan x="1131">/</tspan><tspan x="1137">承台梁</tspan><tspan x="1180">/</tspan><tspan x="1186">基础联系梁</tspan></text>
        </g>
        <path d="M1078 306.500H1112L1117 299L1118 315L1123 306.500H1157M1095.500 306V355M1140.500 306V355"/>
        <path d="M1100 355.500H1055.500V417.500H1187.500V355M1109 355.500H1112M1116 355.500H1126M1129 355.500H1131M1135 355.500H1140M1140 355.500H1303M1187 396.500H1303M1303.500 347V405M1131.500 414V430"/>
        <path d="M1296 376.500H1303L1298 374L1309 378L1303 376.500H1313"/>
        <path d="M1146.500 340V351M1187.500 340V351M1146 346.500H1187M1142 350L1150 342M1184 350L1191 343M1149.500 394V406M1149 401.500H1187M1145 405L1153 398M1184 405L1191 398M1138.500 359V373M1132 359.500H1145M1132 373.500H1145M1134 355L1143 364M1134 369L1143 378M1157.500 381V393M1151 380.500H1163M1151 393.500H1163M1153 376L1162 385M1153 389L1162 398"/>
        <path d="M1303 359H1146V373M1303 393H1149V381" stroke="#f00" stroke-width="2"/>
        <g fill="#0f0" stroke="none" font-family="Liberation Mono" font-size="16"><text x="1160" y="340">la</text><text x="1160" y="415">la</text><text transform="translate(1127 371) rotate(-90)">O</text><text transform="translate(1178 392) rotate(-90)">O</text></g>
        <text x="1135" y="491" font-size="23" fill="#0ff" stroke="none">节点二</text>
        <path d="M1131 497H1205" stroke="#0ff" stroke-width="2"/>
      </svg>
      <p class="mt-[7px] pl-[2px] leading-[17px]">规范算法：来源16G101-3第110页。面筋、底筋根据基础构件的属性是否<br>扣减，如全部扣减或隔一扣一，且基础宽度 &gt;2 倍筏板钢筋伸入长度时，<br>锚入基础内长度默认为 la,弯折长度默认为 0。</p>
    </figure>
  </div>
  <div class="mt-[6px] flex justify-end gap-[6px] pr-[10px] *:h-[26px] *:w-20 *:rounded-[2px] *:pt-[2px]">
    <button class="bg-[#2d80e2] text-white">确定</button><button class="border border-[#c0c2c6] bg-white">取消</button>
  </div>
</div>

<!-- Red mark-up over the windows -->
<svg class="pointer-events-none absolute inset-0 h-full w-full" fill="none" stroke="#f04545">
  <ellipse cx="87" cy="543.500" rx="39" ry="15.500"/><ellipse cx="424" cy="681" rx="31" ry="28"/><ellipse cx="965.500" cy="412" rx="25.500" ry="28.500"/><ellipse cx="1172.500" cy="368.500" rx="32.500" ry="57"/>
  <g fill="#fb3c3a" stroke="none">
    <path d="M105 541L401 671L403 666L417 681L396 680L398 676L105 542Z"/>
    <path d="M437 682L933 422L931 419L942 420L936 430L934 426L437 684Z"/>
    <path d="M970 418L1128 379L1127 375L1138 379L1130 387L1129 383L970 420Z"/>
  </g>
</svg>
</div>
</body>
</html>
